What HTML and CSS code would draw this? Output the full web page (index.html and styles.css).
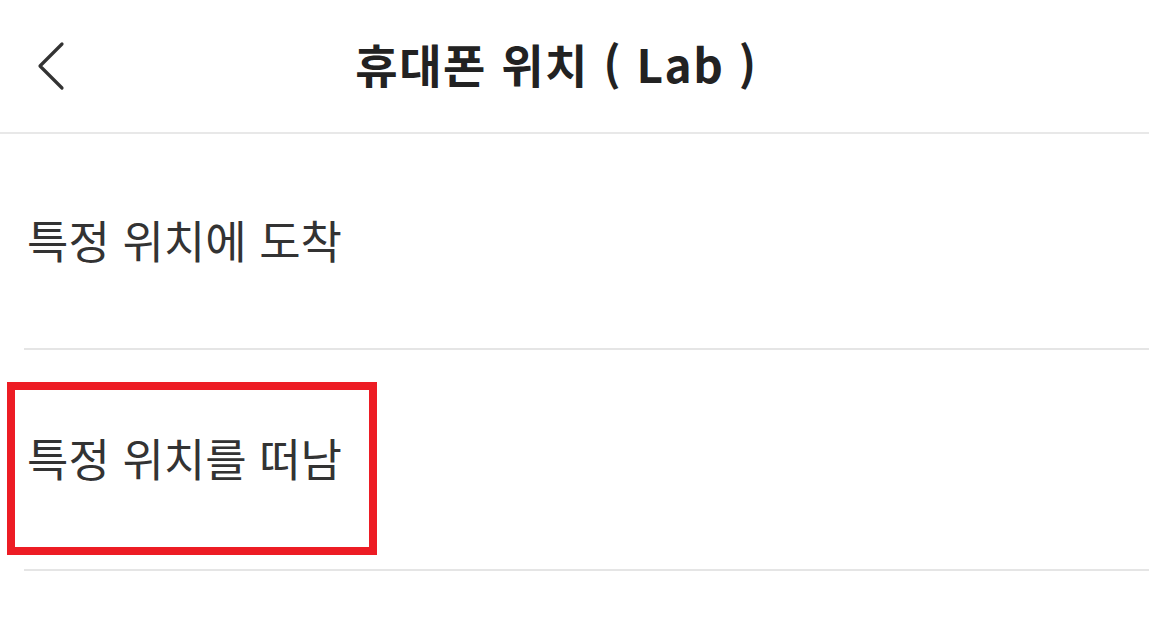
FILE: index.html
```
<!DOCTYPE html>
<html lang="ko">
<head>
<meta charset="utf-8">
<link rel="stylesheet" href="styles.css">
</head>
<body>
<div class="screen">
  <header class="header">
    <button class="back" aria-label="뒤로">
      <svg width="32" height="52" viewBox="0 0 32 52"><path d="M26 4 L4 26 L26 48" fill="none" stroke="#333" stroke-width="3.2" stroke-linecap="round" stroke-linejoin="round"/></svg>
    </button>
    <h1 class="title">휴대폰 위치 ( Lab )</h1>
  </header>
  <ul class="list">
    <li class="item">특정 위치에 도착</li>
    <li class="item">특정 위치를 떠남</li>
  </ul>
  <div class="highlight"></div>
</div>
</body>
</html>
```
FILE: styles.css
```
* { box-sizing: border-box; }
html, body { margin: 0; padding: 0; background: #fff; }
body { font-family: "Noto Sans CJK KR", "Noto Sans", sans-serif; color: #333; }
.screen { position: relative; width: 1149px; height: 635px; overflow: hidden; }
.header {
  position: relative;
  height: 134px;
  display: flex;
  align-items: center;
  justify-content: center;
  border-bottom: 2px solid #e8e8e8;
}
.back {
  position: absolute;
  left: 36px;
  top: 40px;
  padding: 0;
  border: 0;
  background: none;
  line-height: 0;
}
.title {
  margin: 0 36px 6px 0;
  font-size: 46px;
  font-weight: 600;
  color: #222;
  letter-spacing: 1.5px;
}
.list { list-style: none; margin: 0; padding: 0 0 0 24px; }
.item {
  display: flex;
  align-items: center;
  padding-left: 3px;
  padding-bottom: 4px;
  font-size: 45px;
  font-weight: 400;
  color: #333;
  border-bottom: 2px solid #e5e5e5;
}
.item:first-child { height: 216px; }
.item:nth-child(2) { height: 221px; }
.highlight {
  position: absolute;
  left: 7px;
  top: 382px;
  width: 370px;
  height: 173px;
  border: 8px solid #ed1c24;
}
```
